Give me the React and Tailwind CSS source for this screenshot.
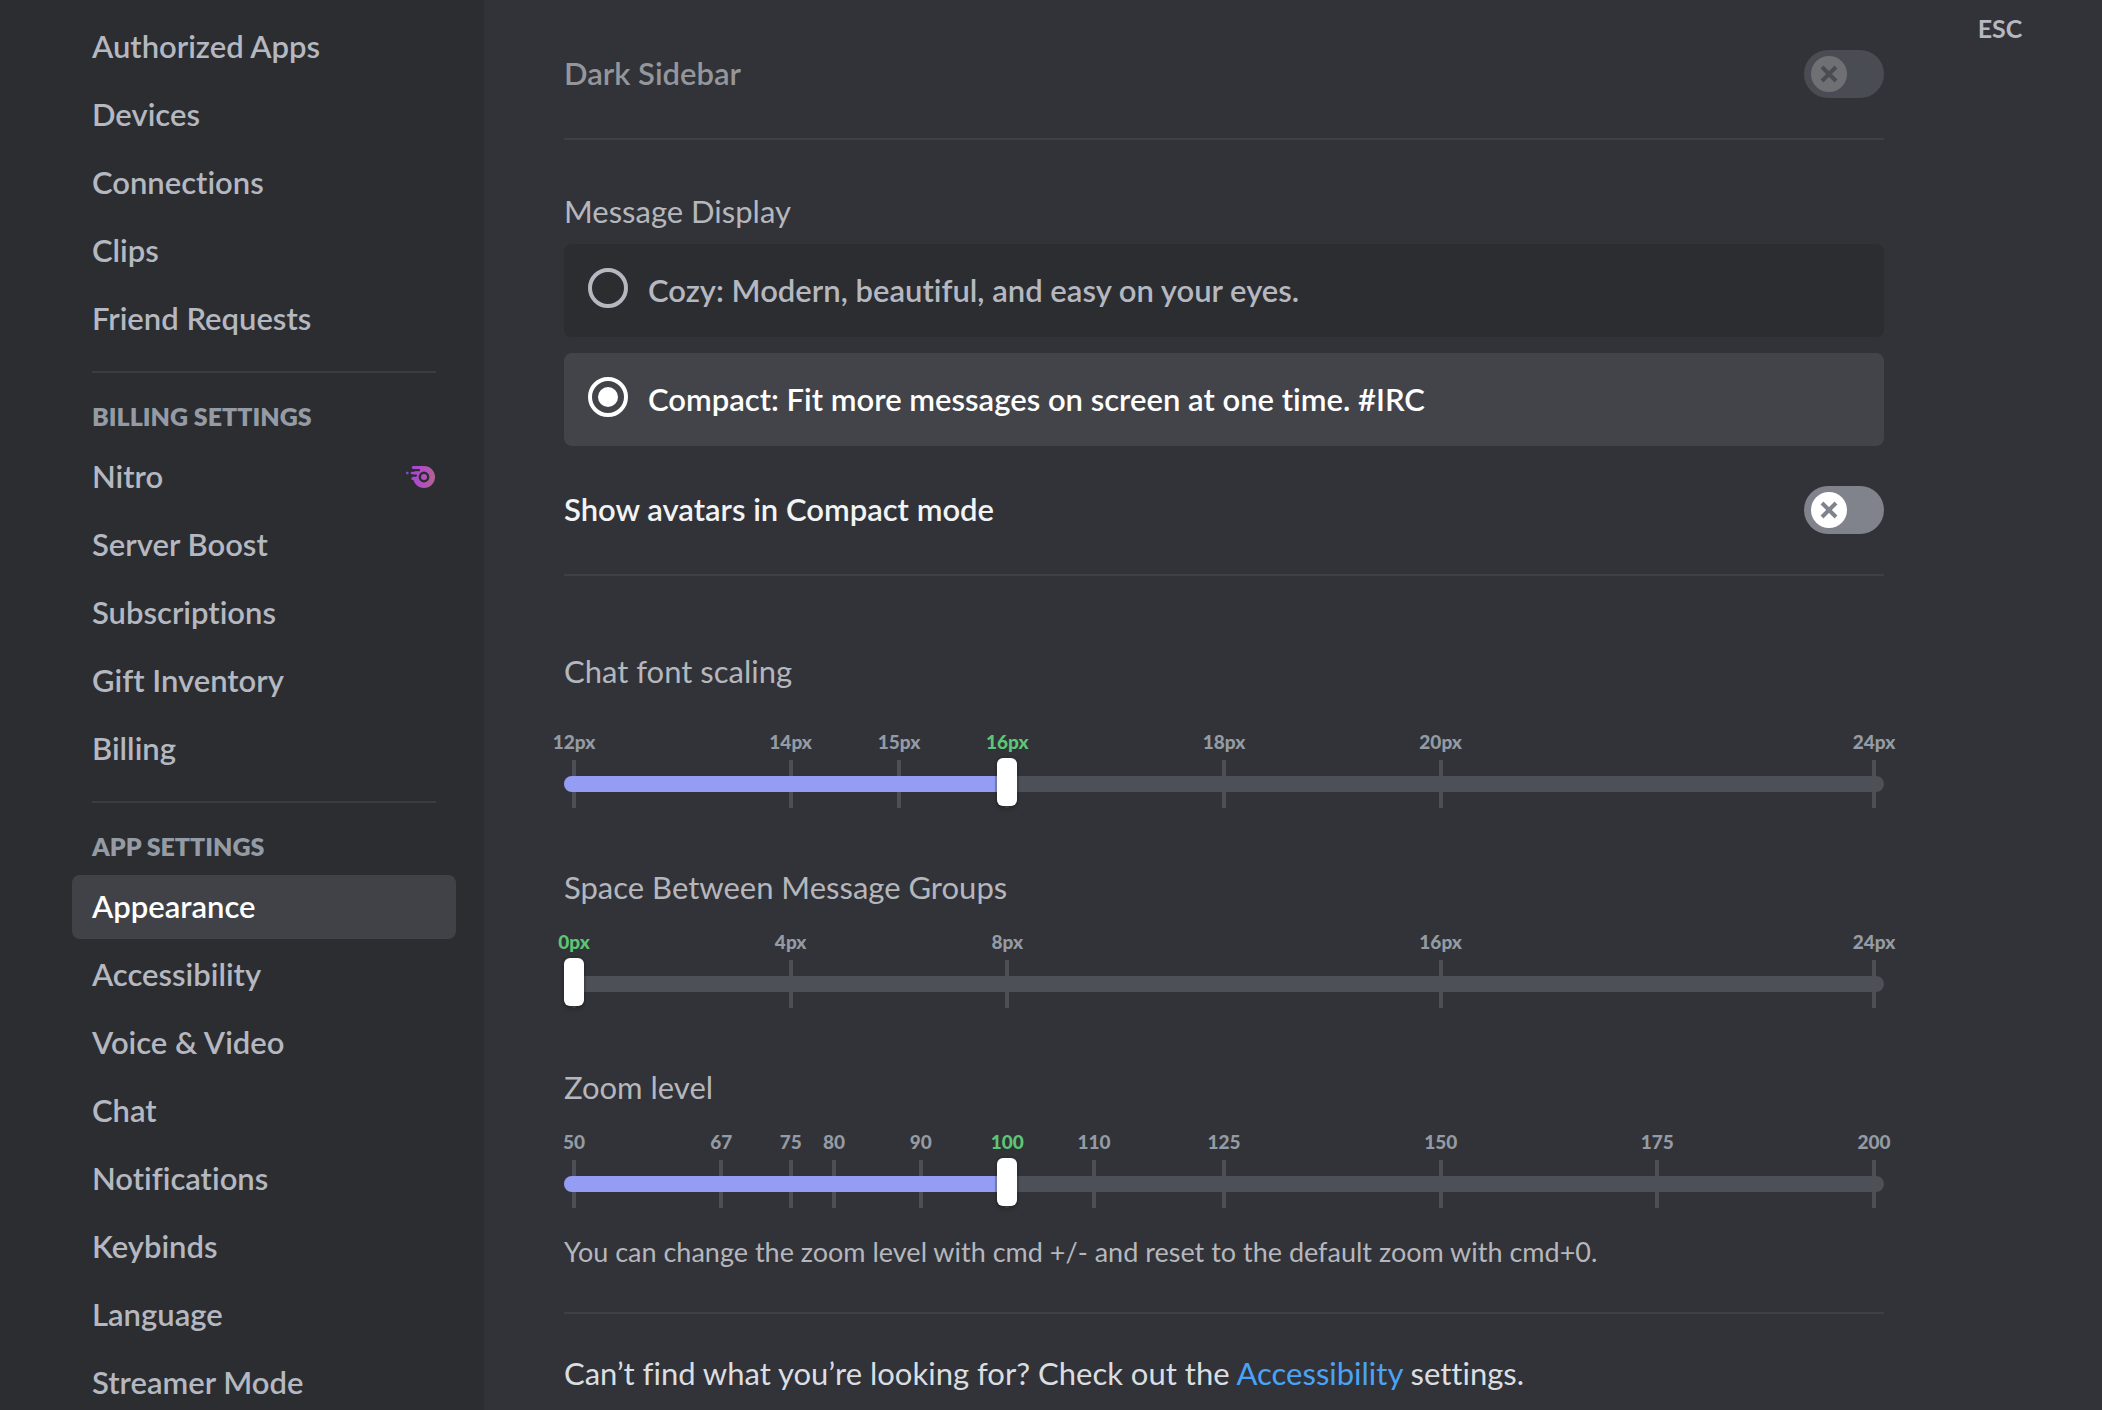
import React, { useState } from "react";

const accountItems = ["Authorized Apps", "Devices", "Connections", "Clips", "Friend Requests"];
const billingItems = ["Nitro", "Server Boost", "Subscriptions", "Gift Inventory", "Billing"];
const appItems = [
  "Appearance",
  "Accessibility",
  "Voice & Video",
  "Chat",
  "Notifications",
  "Keybinds",
  "Language",
  "Streamer Mode",
];

function NitroIcon() {
  return (
    <svg className="mt-0.5" width="30" height="22" viewBox="0 0 30 22" aria-hidden="true">
      <defs>
        <linearGradient id="nitro" x1="4" y1="8" x2="29" y2="12" gradientUnits="userSpaceOnUse">
          <stop offset="0" stopColor="#a845dc" />
          <stop offset="0.5" stopColor="#b24fc0" />
          <stop offset="1" stopColor="#b0648f" />
        </linearGradient>
        <mask id="nitro-cut" maskUnits="userSpaceOnUse" x="0" y="0" width="30" height="22">
          <rect width="30" height="22" fill="#fff" />
          <path d="M4 4.2H13M3 9.6H10" stroke="#000" strokeWidth="2.2" strokeLinecap="round" />
          <circle cx="18" cy="11" r="4.2" fill="none" stroke="#000" strokeWidth="2.4" />
        </mask>
      </defs>
      <g fill="url(#nitro)" mask="url(#nitro-cut)">
        <circle cx="18" cy="11" r="11" />
        <path d="M7.2 0H18V3H7.2A1.4 1.4 0 0 1 7.2 0ZM6 5.8H15V8.4H6A1.3 1.3 0 0 1 6 5.8ZM6.6 11.2H12V14H6.6A1.4 1.4 0 0 1 6.6 11.2Z" />
      </g>
      <rect x="0" y="5.8" width="2.6" height="2.4" rx="1" fill="#8d45d0" />
    </svg>
  );
}

function NavItem({ label, active, onSelect }) {
  return (
    <li>
      <button
        type="button"
        onClick={() => onSelect(label)}
        aria-current={active ? "page" : undefined}
        className={`flex h-16 w-full items-center justify-between rounded-lg px-5 pb-0.5 text-left text-[31px] font-semibold whitespace-nowrap ${
          active ? "bg-[#414247] text-white" : "text-[#b5b8c0]"
        }`}
      >
        {label}
        {label === "Nitro" && <NitroIcon />}
      </button>
    </li>
  );
}

function NavGroup({ title, items, active, onSelect }) {
  return (
    <section>
      {title && (
        <>
          <hr className="mx-5 mt-5 mb-4 border-t-2 border-[#3b3c43]" />
          <h2 className="px-5 pt-[11px] pb-[13px] text-[25px] leading-8 font-extrabold text-[#949ba4]">{title}</h2>
        </>
      )}
      <ul className="flex flex-col gap-1">
        {items.map((item) => (
          <NavItem key={item} label={item} active={item === active} onSelect={onSelect} />
        ))}
      </ul>
    </section>
  );
}

function Divider() {
  return <hr className="mt-10 border-t-2 border-[#3f4046]" />;
}

function SwitchRow({ id, label, disabled, className }) {
  return (
    <div className={`flex h-12 items-center justify-between ${className}`}>
      <label
        htmlFor={id}
        className={`pb-0.5 text-[31px] font-semibold ${disabled ? "text-[#95969b]" : "text-[#f2f3f5]"}`}
      >
        {label}
      </label>
      <span className="relative flex">
        <input
          id={id}
          type="checkbox"
          role="switch"
          disabled={disabled}
          className={`peer h-12 w-20 appearance-none rounded-full ${disabled ? "bg-[#494c53]" : "bg-[#80838c]"}`}
        />
        <svg
          className="pointer-events-none absolute top-1.5 left-[7px] peer-checked:left-[37px]"
          width="36"
          height="36"
          viewBox="0 0 36 36"
          aria-hidden="true"
        >
          <circle cx="18" cy="18" r="18" fill={disabled ? "#6f7074" : "#ffffff"} />
          <path
            d="M11 11L25 25M25 11L11 25"
            stroke={disabled ? "#494c53" : "#80838c"}
            strokeWidth="4"
          />
        </svg>
      </span>
    </div>
  );
}

function RadioCard({ value, label, checked, onChange }) {
  return (
    <label
      className={`flex items-start gap-5 rounded-lg p-6 text-[31px] leading-[45px] font-semibold ${
        checked ? "bg-[#434449] text-white" : "bg-[#2b2d31] text-[#b5b8c0]"
      }`}
    >
      <input
        type="radio"
        name="message-display"
        value={value}
        checked={checked}
        onChange={() => onChange(value)}
        className="grid size-10 shrink-0 appearance-none place-content-center rounded-full border-4 border-current before:size-5 before:rounded-full checked:before:bg-current"
      />
      {label}
    </label>
  );
}

function MarkedSlider({ id, min, max, marks, unit = "", initial, className }) {
  const [value, setValue] = useState(initial);
  const percent = (v) => `${((v - min) / (max - min)) * 100}%`;
  return (
    <div className={className}>
      <div className="relative mx-2.5 h-6">
        {marks.map((m) => (
          <span
            key={m}
            className={`absolute -translate-x-1/2 text-[19px] leading-6 font-black ${
              m === value ? "text-[#5dc676]" : "text-[#949ba4]"
            }`}
            style={{ left: percent(m) }}
          >
            {m}
            {unit}
          </span>
        ))}
      </div>
      <div className="relative mt-1.5 flex h-12 items-center">
        <div className="absolute inset-x-2.5 inset-y-0">
          {marks.map((m) => (
            <span
              key={m}
              className="absolute h-full w-1 -translate-x-1/2 bg-[#4e4f55]"
              style={{ left: percent(m) }}
            />
          ))}
        </div>
        <div className="relative h-4 w-full overflow-hidden rounded-full bg-[#4e5058] pr-5">
          <div className="h-full bg-[#949cf3] pl-2.5" style={{ width: percent(value) }} hidden={value === min} />
        </div>
        <input
          id={id}
          type="range"
          min={min}
          max={max}
          value={value}
          onChange={(e) => setValue(Number(e.target.value))}
          className="absolute inset-x-0 -top-0.5 h-12 w-full appearance-none bg-transparent [&::-webkit-slider-thumb]:h-12 [&::-webkit-slider-thumb]:w-5 [&::-webkit-slider-thumb]:appearance-none [&::-webkit-slider-thumb]:rounded-md [&::-webkit-slider-thumb]:bg-white [&::-webkit-slider-thumb]:shadow-[0_0_0_2px_rgba(32,34,37,0.25),0_4px_4px_rgba(0,0,0,0.15)]"
        />
      </div>
    </div>
  );
}

function SliderTitle({ htmlFor, children, className }) {
  return (
    <label htmlFor={htmlFor} className={`block text-[31px] leading-10 text-[#b5b7bd] ${className}`}>
      {children}
    </label>
  );
}

export default function App() {
  const [page, setPage] = useState("Appearance");
  const [display, setDisplay] = useState("compact");

  return (
    <div className="flex h-screen overflow-hidden bg-[#313338] font-['Lato',sans-serif] [font-variant-ligatures:none]">
      <nav aria-label="Settings" className="w-[484px] shrink-0 overflow-hidden bg-[#2b2d31] pt-[15px] pr-7 pl-[72px]">
        <NavGroup items={accountItems} active={page} onSelect={setPage} />
        <NavGroup title="BILLING SETTINGS" items={billingItems} active={page} onSelect={setPage} />
        <NavGroup title="APP SETTINGS" items={appItems} active={page} onSelect={setPage} />
      </nav>

      <main className="min-w-0 flex-1 pt-[50px] pl-20">
        <SwitchRow id="dark-sidebar" label="Dark Sidebar" disabled className="" />
        <Divider />

        <h3 id="display-title" className="mt-[51px] text-[31px] leading-10 text-[#b5b7bd]">
          Message Display
        </h3>
        <div role="radiogroup" aria-labelledby="display-title" className="mt-[13px] flex flex-col gap-4">
          <RadioCard
            value="cozy"
            label="Cozy: Modern, beautiful, and easy on your eyes."
            checked={display === "cozy"}
            onChange={setDisplay}
          />
          <RadioCard
            value="compact"
            label="Compact: Fit more messages on screen at one time. #IRC"
            checked={display === "compact"}
            onChange={setDisplay}
          />
        </div>
        <SwitchRow id="compact-avatars" label="Show avatars in Compact mode" className="mt-10" />
        <Divider />

        <SliderTitle htmlFor="font-scale" className="mt-[75px]">
          Chat font scaling
        </SliderTitle>
        <MarkedSlider
          id="font-scale"
          min={12}
          max={24}
          marks={[12, 14, 15, 16, 18, 20, 24]}
          unit="px"
          initial={16}
          className="mt-[39px]"
        />

        <SliderTitle htmlFor="group-space" className="mt-[59px]">
          Space Between Message Groups
        </SliderTitle>
        <MarkedSlider
          id="group-space"
          min={0}
          max={24}
          marks={[0, 4, 8, 16, 24]}
          unit="px"
          initial={0}
          className="mt-[23px]"
        />

        <SliderTitle htmlFor="zoom-level" className="mt-[59px]">
          Zoom level
        </SliderTitle>
        <MarkedSlider
          id="zoom-level"
          min={50}
          max={200}
          marks={[50, 67, 75, 80, 90, 100, 110, 125, 150, 175, 200]}
          initial={100}
          className="mt-[23px]"
        />
        <p className="mt-6 text-[27px] leading-10 text-[#b5b7bd]">
          You can change the zoom level with cmd +/- and reset to the default zoom with cmd+0.
        </p>
        <Divider />
        <p className="mt-[39px] text-[31px] leading-10 text-[#dbdee1]">
          Can’t find what you’re looking for? Check out the{" "}
          <a href="#accessibility" className="text-[#4aa3f5]">
            Accessibility
          </a>{" "}
          settings.
        </p>
      </main>

      <aside className="mr-[66px] ml-20 flex w-[72px] shrink-0 items-start justify-center pt-3">
        <button type="button" className="text-[25px] leading-8 font-bold text-[#b5b8c0]">
          ESC
        </button>
      </aside>
    </div>
  );
}
